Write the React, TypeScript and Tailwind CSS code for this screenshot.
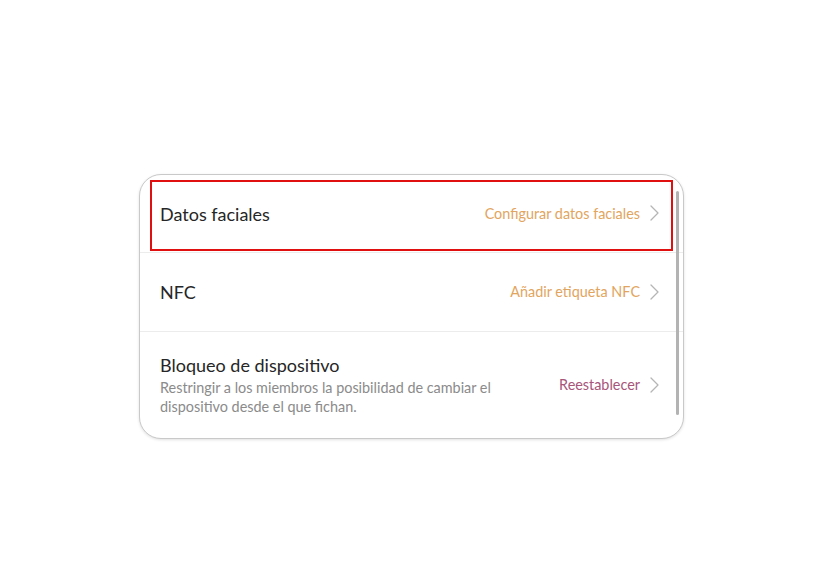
type Row = {
  title: string
  description?: string
  action: string
  actionColor: string
  height: string
}

const rows: Row[] = [
  { title: 'Datos faciales', action: 'Configurar datos faciales', actionColor: 'text-[#e2a560]', height: 'h-[78px]' },
  { title: 'NFC', action: 'Añadir etiqueta NFC', actionColor: 'text-[#e2a560]', height: 'h-[79px]' },
  {
    title: 'Bloqueo de dispositivo',
    description: 'Restringir a los miembros la posibilidad de cambiar el dispositivo desde el que fichan.',
    action: 'Reestablecer',
    actionColor: 'text-[#a8557a]',
    height: 'h-[106px]',
  },
]

function Chevron() {
  return (
    <svg width="9" height="16" viewBox="0 0 9 16" fill="none" className="text-[#b5b5b5]">
      <path d="M1 1l7 7-7 7" stroke="currentColor" strokeWidth="1.3" strokeLinecap="round" strokeLinejoin="round" />
    </svg>
  )
}

export default function App() {
  return (
    <div className="h-[587px] w-[824px] bg-white pl-[139px] pt-[174px] font-['Lato','Noto_Sans',sans-serif]">
      <div className="relative w-[545px] overflow-hidden rounded-[22px] border border-[#c9c9c9] bg-white shadow-[0_1px_3px_rgba(0,0,0,0.12)]">
        {rows.map((row, i) => (
          <div
            key={row.title}
            className={`flex items-center justify-between pl-5 pr-[24px] ${row.height} ${
              i < rows.length - 1 ? 'border-b border-[#ececec]' : ''
            }`}
          >
            <div className="flex flex-col">
              <div className="text-[18px] leading-[22px] text-[#262626]">{row.title}</div>
              {row.description && (
                <div className="mt-[2px] w-[350px] text-[14.4px] leading-[19px] text-[#8b8b8b]">
                  {row.description}
                </div>
              )}
            </div>
            <div className="flex items-center gap-[10px]">
              <span className={`text-[14.4px] ${row.actionColor}`}>{row.action}</span>
              <Chevron />
            </div>
          </div>
        ))}

        {/* scrollbar */}
        <div className="absolute right-[4px] top-[16px] h-[224px] w-[3px] rounded-full bg-[#b3b3b3]" />

        {/* highlight */}
        <div className="absolute left-[10px] top-[5px] h-[71px] w-[523px] border-2 border-[#e01010]" />
      </div>
    </div>
  )
}
